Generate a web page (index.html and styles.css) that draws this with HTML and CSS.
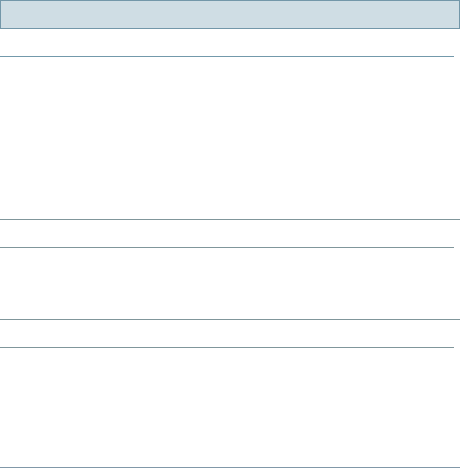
FILE: index.html
```html
<!DOCTYPE html>
<html>
<head>
<meta charset="utf-8">
<link rel="stylesheet" href="styles.css">
</head>
<body>
<div class="page">
  <div class="topbar"></div>
  <div class="sec-head sec-head--blue"></div>
  <div class="sec-body sec-body--a"></div>
  <section class="sec">
    <div class="sec-head"></div>
    <div class="sec-body sec-body--b"></div>
  </section>
  <section class="sec sec--last">
    <div class="sec-head"></div>
    <div class="sec-body sec-body--c"></div>
  </section>
</div>
</body>
</html>
```
FILE: styles.css
```css
html, body {
  margin: 0;
  padding: 0;
  background: #ffffff;
  font-family: "Liberation Sans", Arial, sans-serif;
}
.page {
  width: 460px;
  display: flex;
  flex-direction: column;
}
.topbar {
  box-sizing: border-box;
  height: 29px;
  width: 460px;
  background: #cfdde4;
  border: 1px solid #7397a9;
}
.sec-head {
  box-sizing: border-box;
  height: 28px;
  width: 454px;
  border-bottom: 1px solid #80969b;
}
.sec-head--blue {
  border-bottom-color: #7399ab;
}
.sec-body--a { height: 162px; }
.sec-body--b { height: 71px; }
.sec-body--c { height: 119px; }
.sec {
  border-top: 1px solid #80969b;
}
.sec--last {
  border-bottom: 1px solid #8198a8;
}
```
